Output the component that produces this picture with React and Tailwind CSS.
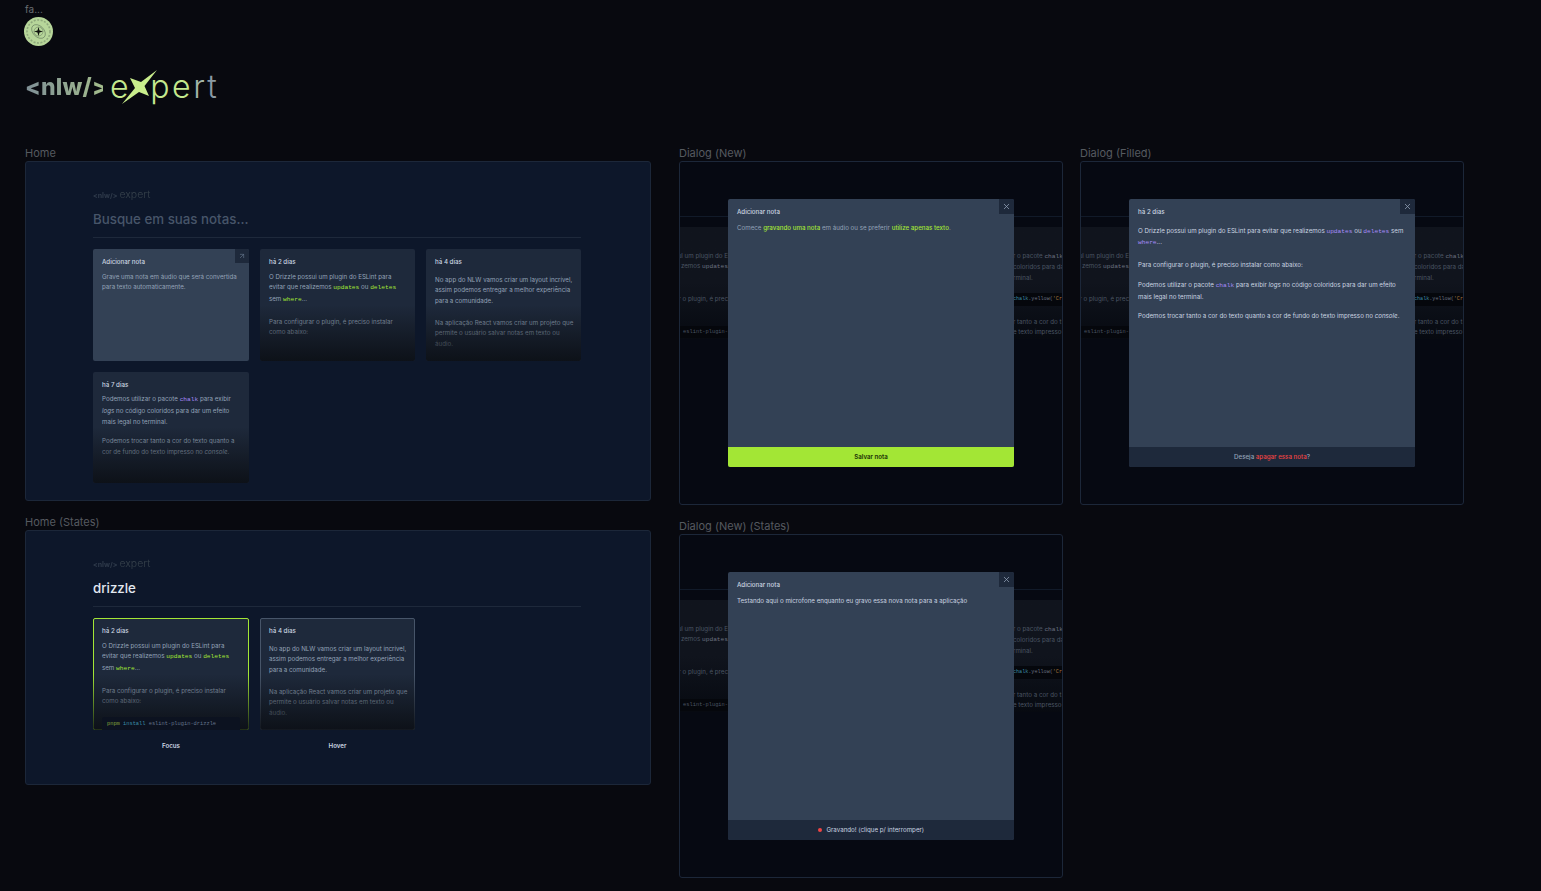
import { X, ArrowUpRight } from 'lucide-react'

const sans = "font-['Inter',sans-serif]"
const mono = "font-['Liberation_Mono',monospace]"

function Code({ children, className = 'text-[#a3e635]' }) {
  return <span className={`${mono} ${className}`}>{children}</span>
}

// marca "<nlw/> expert"
function Logo({ big }) {
  if (big) {
    return (
      <div className="flex items-center h-[34px] leading-none">
        <span className="w-[78px] whitespace-nowrap text-[23px] font-extrabold tracking-[0.2px] bg-gradient-to-r from-[#7f8f96] to-[#a3bc8c] bg-clip-text text-transparent">&lt;nlw/&gt;</span>
        <span className="ml-[7px] flex items-center text-[32px] font-light tracking-[2.6px] text-[#c4e88e]">
          <span>e</span>
          <svg className="w-[36px] h-[36px] -ml-[9px] -mr-[8px] shrink-0" viewBox="0 0 36 36">
            <path d="M35 1 L22.5 17 L27 27 L17 23 L0 35 L13 19 L8 9 L19 13 Z" fill="#c9ee8c" />
          </svg>
          <span>pe</span>
          <span className="text-[#a3b5a8]">r</span>
          <span className="text-[#8a9aa4]">t</span>
        </span>
      </div>
    )
  }
  return (
    <div className="flex items-center h-[10px] leading-none opacity-25">
      <span className="text-[7px] font-bold text-[#8f9fa8]">&lt;nlw/&gt;</span>
      <span className="ml-[2px] text-[10.5px] font-light text-[#a9b8a8]">expert</span>
    </div>
  )
}

function Label({ children }) {
  return <div className={`text-[11px] leading-[13px] h-[14px] text-[#565a60] ${sans}`}>{children}</div>
}

function Card({ title, children, className = '' }) {
  return (
    <div className={`relative overflow-hidden rounded-[2px] bg-[#1e293b] h-full ${className}`}>
      <div className="pl-[9px] pr-[7px] pt-[8px] text-[6.2px] leading-[10.7px]">
        <div className="font-medium text-[#cbd5e1] mb-[4px]">{title}</div>
        <div className="text-[#94a3b8]">{children}</div>
      </div>
      <div className="absolute inset-x-0 bottom-0 h-[50%] bg-gradient-to-b from-transparent to-[#0a0d12]/85" />
    </div>
  )
}

function DrizzleText() {
  return (
    <>
      <p>O Drizzle possui um plugin do ESLint para evitar que realizemos <Code>updates</Code> ou <Code>deletes</Code> sem <Code>where</Code>...</p>
      <p className="mt-[10.7px]">Para configurar o plugin, é preciso instalar como abaixo:</p>
    </>
  )
}

function NlwText() {
  return (
    <div className="pt-[3px]">
      <p>No app do NLW vamos criar um layout incrível, assim podemos entregar a melhor experiência para a comunidade.</p>
      <p className="mt-[10.7px]">Na aplicação React vamos criar um projeto que permite o usuário salvar notas em texto ou áudio.</p>
    </div>
  )
}

function HomeFrame() {
  return (
    <div className={`h-[340px] rounded-[3px] border border-[#1c2739] bg-[#0d172a] pl-[67px] pr-[69px] pt-[28px] ${sans}`}>
      <Logo />
      <div className="mt-[8px] text-[13.3px] leading-[22px] font-medium text-[#475569]">Busque em suas notas...</div>
      <div className="mt-[7px] h-px bg-[#1e293b]" />
      <div className="mt-[11px] grid grid-cols-[156px_155px_155px] gap-x-[11px] gap-y-[11px] auto-rows-[111.5px]">
        <div className="relative overflow-hidden rounded-[2px] bg-[#334155]">
          <div className="pl-[9px] pr-[7px] pt-[8px] text-[6.2px] leading-[10.7px]">
            <div className="font-medium text-[#cbd5e1] mb-[4px]">Adicionar nota</div>
            <div className="text-[#94a3b8]">Grave uma nota em áudio que será convertida para texto automaticamente.</div>
          </div>
          <div className="absolute right-0 top-0 w-[14px] h-[14px] bg-[#1e293b] flex items-center justify-center">
            <ArrowUpRight className="w-[8px] h-[8px] text-[#64748b]" />
          </div>
        </div>
        <Card title="há 2 dias"><DrizzleText /></Card>
        <Card title="há 4 dias"><NlwText /></Card>
        <Card title="há 7 dias">
          <p>Podemos utilizar o pacote <Code className="text-[#a78bfa]">chalk</Code> para exibir <em>logs</em> no código coloridos para dar um efeito mais legal no terminal.</p>
          <p className="mt-[9px]">Podemos trocar tanto a cor do texto quanto a cor de fundo do texto impresso no <em>console</em>.</p>
        </Card>
      </div>
    </div>
  )
}

function StatesFrame() {
  return (
    <div className={`h-[255px] rounded-[3px] border border-[#1c2739] bg-[#0d172a] pl-[67px] pr-[69px] pt-[28px] ${sans}`}>
      <Logo />
      <div className="mt-[8px] text-[13.3px] leading-[22px] font-medium text-[#e2e8f0]">drizzle</div>
      <div className="mt-[7px] h-px bg-[#1e293b]" />
      <div className="mt-[11px] grid grid-cols-[156px_155px_155px] gap-x-[11px]">
        <div>
          <div className="h-[112px]">
            <Card title="há 2 dias" className="outline outline-[#a3e635] -outline-offset-1">
              <DrizzleText />
              <div className={`relative z-10 mt-[10px] mr-[2px] rounded-[2px] bg-[#0c1220] px-[5px] py-[2px] whitespace-nowrap text-[5.35px] ${mono} text-[#64748b]`}>
                <span className="text-[#84a83c]">pnpm</span> <span className="text-[#3b8ea8]">install</span> eslint-plugin-drizzle
              </div>
            </Card>
          </div>
          <div className="mt-[12px] text-center text-[6.2px] leading-[8px] font-semibold text-[#cbd5e1]">Focus</div>
        </div>
        <div>
          <div className="h-[112px]">
            <Card title="há 4 dias" className="outline outline-[#475569] -outline-offset-1"><NlwText /></Card>
          </div>
          <div className="mt-[12px] text-center text-[6.2px] leading-[8px] font-semibold text-[#cbd5e1]">Hover</div>
        </div>
      </div>
    </div>
  )
}

// fundo escurecido atrás do dialog (tela home recortada)
function DimBackdrop() {
  return (
    <div className={`h-full overflow-hidden text-[6.2px] leading-[10.7px] text-[#4b5563] ${sans}`}>
      <div className="mt-[54px] h-px bg-[#111a29]" />
      <div className="mt-[10px] h-[112px] bg-gradient-to-b from-[#10141d] via-[#10141d] to-[#070a11] flex justify-between">
        <div className="w-[48px] overflow-hidden whitespace-nowrap flex flex-col items-end pt-[23.5px]">
          <p>ul um plugin do E</p>
          <p>zemos <span className={`${mono} text-[#6b7280]`}>updates</span></p>
          <p className="mt-[21px]">r o plugin, é prec</p>
          <p className={`mt-[21px] bg-[#05070c] w-[48px] flex justify-end py-px text-[5.35px] ${mono}`}>eslint-plugin-</p>
        </div>
        <div className="w-[49px] overflow-hidden whitespace-nowrap flex flex-col pt-[23.5px]">
          <p>r o pacote <span className={`${mono} text-[#6b7280]`}>chalk</span></p>
          <p>coloridos para dar</p>
          <p>rminal.</p>
          <p className={`mt-[9.5px] bg-[#05070c] py-px text-[5.1px] ${mono} text-[#6b7280]`}><span className="text-[#3b8ea8]">chalk</span>.yellow(<span className="text-[#a8763b]">'Cr</span></p>
          <p className="mt-[10.7px]">r tanto a cor do t</p>
          <p>e texto impresso</p>
        </div>
      </div>
    </div>
  )
}

function Dialog({ title, footer, children }) {
  return (
    <div className="absolute left-[48px] top-[37px] w-[286px] h-[268px] rounded-[2px] overflow-hidden bg-[#334155] flex flex-col">
      <div className="absolute right-0 top-0 w-[15px] h-[15px] bg-[#1e293b] flex items-center justify-center">
        <X className="w-[9px] h-[9px] text-[#94a3b8]" />
      </div>
      <div className="flex-1 px-[9px] pt-[8px] text-[6.2px] leading-[10.7px]">
        <div className="font-medium text-[#cbd5e1] mb-[5px]">{title}</div>
        <div className="text-[#cbd5e1]">{children}</div>
      </div>
      {footer}
    </div>
  )
}

function DialogFrame({ dialog }) {
  return (
    <div className="relative h-[344px] rounded-[3px] border border-[#1c2739] bg-[#060912] overflow-hidden">
      <DimBackdrop />
      {dialog}
    </div>
  )
}

const violet = 'text-[#a78bfa]'

export default function App() {
  return (
    <div className={`min-h-[891px] bg-[#08090f] pl-[25px] pt-[3px] ${sans}`}>
      <div className="text-[10px] leading-[13px] text-[#6b6e73]">fa...</div>
      <svg className="w-[29px] h-[29px] mt-px -ml-px" viewBox="0 0 29 29">
        <circle cx="14.5" cy="14.5" r="14.5" fill="#b7d69a" />
        <circle cx="14.5" cy="14.5" r="11.5" fill="none" stroke="#8fa97c" strokeWidth="1.6" strokeDasharray="2 1.5" />
        <ellipse cx="14.5" cy="14.5" rx="8" ry="5.5" fill="none" stroke="#5e7358" strokeWidth="0.6" transform="rotate(45 14.5 14.5)" />
        <circle cx="14.5" cy="14.5" r="4.5" fill="none" stroke="#5e7358" strokeWidth="0.5" />
        <path d="M14.5 10 L15.5 13.5 L19 14.5 L15.5 15.5 L14.5 19 L13.5 15.5 L10 14.5 L13.5 13.5 Z" fill="#10140f" />
      </svg>
      <div className="mt-[24px]"><Logo big /></div>
      <div className="mt-[43px] flex items-start">
        <div className="w-[626px] shrink-0">
          <Label>Home</Label>
          <HomeFrame />
          <div className="mt-[15px]"><Label>Home (States)</Label></div>
          <StatesFrame />
        </div>
        <div className="ml-[28px] w-[384px] shrink-0">
          <Label>Dialog (New)</Label>
          <DialogFrame dialog={
            <Dialog title="Adicionar nota" footer={
              <div className="h-[20px] bg-[#a3e635] flex items-center justify-center text-[6.2px] font-semibold text-[#1a2e05]">Salvar nota</div>
            }>
              <p className="text-[#94a3b8]">Comece <span className="font-medium text-[#a3e635]">gravando uma nota</span> em áudio ou se preferir <span className="font-medium text-[#a3e635]">utilize apenas texto</span>.</p>
            </Dialog>
          } />
          <div className="mt-[15px]"><Label>Dialog (New) (States)</Label></div>
          <DialogFrame dialog={
            <Dialog title="Adicionar nota" footer={
              <div className="h-[20px] bg-[#1e293b] flex items-center justify-center gap-[4px] text-[6.2px] text-[#cbd5e1]">
                <span className="w-[4.5px] h-[4.5px] rounded-full bg-[#ef4444]" />Gravando! (clique p/ interromper)
              </div>
            }>
              <p>Testando aqui o microfone enquanto eu gravo essa nova nota para a aplicação</p>
            </Dialog>
          } />
        </div>
        <div className="ml-[17px] w-[384px] shrink-0">
          <Label>Dialog (Filled)</Label>
          <DialogFrame dialog={
            <Dialog title="há 2 dias" footer={
              <div className="h-[20px] bg-[#1e293b] flex items-center justify-center text-[6.2px] font-medium text-[#94a3b8]">
                <span>Deseja <span className="text-[#ef4444]">apagar essa nota</span>?</span>
              </div>
            }>
              <div className="pt-[3px]">
                <p>O Drizzle possui um plugin do ESLint para evitar que realizemos <Code className={violet}>updates</Code> ou <Code className={violet}>deletes</Code> sem <Code className={violet}>where</Code>...</p>
                <p className="mt-[10.7px]">Para configurar o plugin, é preciso instalar como abaixo:</p>
                <p className="mt-[9.3px]">Podemos utilizar o pacote <Code className={violet}>chalk</Code> para exibir <em>logs</em> no código coloridos para dar um efeito mais legal no terminal.</p>
                <p className="mt-[8.5px]">Podemos trocar tanto a cor do texto quanto a cor de fundo do texto impresso no <em>console</em>.</p>
              </div>
            </Dialog>
          } />
        </div>
      </div>
    </div>
  )
}
